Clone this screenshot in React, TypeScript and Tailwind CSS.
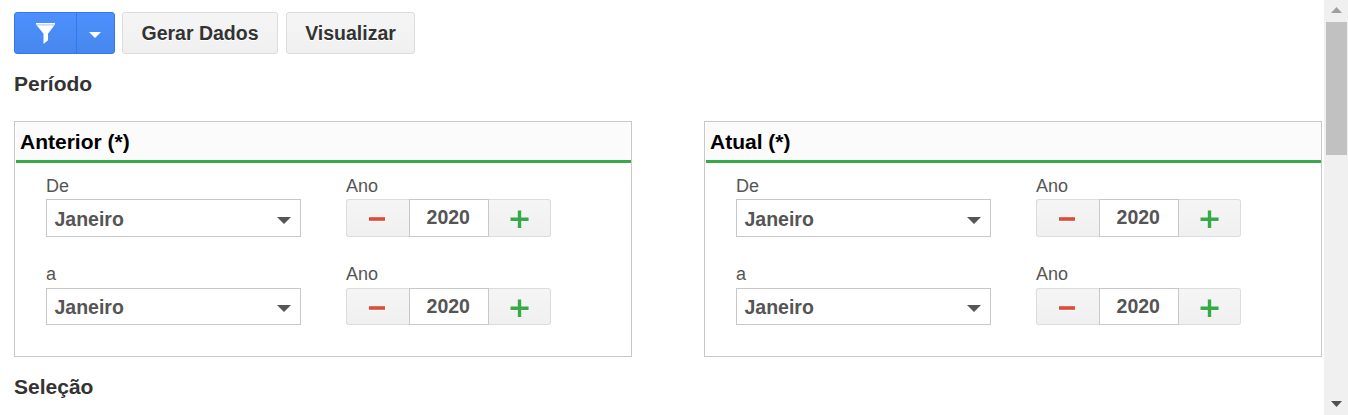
import React, { useState } from 'react';

type RowProps = {
  label: string;
  className: string;
  labelClass: string;
  height: string;
};

const spinButton =
  'flex w-[63px] items-center justify-center border border-[#dcdcdc] bg-linear-to-b from-[#f5f5f5] to-[#f0f0f0]';

const PeriodRow = ({ label, className, labelClass, height }: RowProps) => {
  const [year, setYear] = useState<number>(2020);

  return (
    <div className={`flex ${className}`}>
      <div className="w-[255px]">
        <div className={`h-[27px] text-[18px] text-[#555] ${labelClass}`}>{label}</div>
        <button
          type="button"
          className={`flex w-full items-center justify-between border border-[#c8c8c8] bg-white pr-[9px] pl-[7.5px] text-[19.5px] leading-[29px] font-bold text-[#555] ${height}`}
        >
          <span className="mt-[2.5px]">Janeiro</span>
          <svg className="mt-1 h-[7px] w-[14px]" viewBox="0 0 14 7" fill="#555">
            <path d="M0 0h14L7 7z" />
          </svg>
        </button>
      </div>

      <div className="ml-[45px]">
        <div className={`h-[27px] text-[18px] text-[#555] ${labelClass}`}>Ano</div>
        <div className={`flex ${height}`}>
          <button type="button" className={`${spinButton} rounded-l-[3px] border-r-0`} onClick={() => setYear(year - 1)}>
            <svg className="mt-0.5 h-5 w-5 drop-shadow-[0_1px_0_#fff]" viewBox="0 0 20 20" fill="#dd4b39">
              <path d="M1 8.2h16v3.6H1z" />
            </svg>
          </button>
          <div className="relative z-10 flex w-[80px] justify-center border border-[#c8c8c8] bg-white pt-[3px] pr-[1.5px] text-[19.5px] leading-[29px] font-bold text-[#555]">
            {year}
          </div>
          <button type="button" className={`${spinButton} -ml-px rounded-r-[3px] border-l-0`} onClick={() => setYear(year + 1)}>
            <svg className="mt-0.5 h-5 w-5 drop-shadow-[0_1px_0_#fff]" viewBox="0 0 20 20" fill="#35aa47">
              <path d="M8.8 1.6h3.4v6.9h7.4v3.4h-7.4V19H8.8v-7.1H1.5V8.5h7.3z" />
            </svg>
          </button>
        </div>
      </div>
    </div>
  );
};

const Panel = ({ title }: { title: string }) => (
  <div className="h-[236px] w-[618px] border border-[#c8c8c8] bg-white">
    <div className="ml-px h-[41px] border-b-[3px] border-[#35aa47] bg-[#fbfbfb] pl-1 text-[21px] leading-[40px] font-bold text-black">
      {title}
    </div>
    <div className="pt-[9px] pl-[31px]">
      <PeriodRow label="De" className="h-[88px]" labelClass="leading-[29px]" height="h-[38px]" />
      <PeriodRow label="a" className="pt-px" labelClass="leading-[27px]" height="h-[37px]" />
    </div>
  </div>
);

const App = () => {
  const toolButton =
    'h-[42px] rounded-[3px] border border-[#dcdcdc] bg-linear-to-b from-[#f5f5f5] to-[#f0f0f0] text-[19.5px] leading-[40px] font-bold text-[#333] [text-shadow:0_1px_0_#fff]';

  return (
    <div className="flex h-[415px] w-[1348px] justify-between overflow-hidden bg-white font-['Liberation_Sans',Arial,sans-serif]">
      <main className="pt-3 pl-3.5">
        <div className="flex">
          <div className="flex h-[42px] w-[101px] overflow-hidden rounded-[3px] border border-[#3079ed] bg-linear-to-b from-[#4d90fe] to-[#4787ed]">
            <button type="button" className="flex w-[62px] items-center justify-center border-r border-[#3079ed]">
              <svg className="mt-px h-[21px] w-[19px]" viewBox="0 0 19 21" fill="#fff">
                <path d="M0 0h19v1.6H0z" />
                <path d="M0 1.6h19L18 3H1z" fillOpacity="0.7" />
                <path d="M1 2.8h17L12 10.7v6.6L7.5 21V10.7z" />
              </svg>
            </button>
            <button type="button" className="flex flex-1 items-center justify-center pr-[1.5px]">
              <svg className="mt-[3px] h-[6px] w-3" viewBox="0 0 12 6" fill="#fff">
                <path d="M0 0h12L6 6z" />
              </svg>
            </button>
          </div>
          <button type="button" className={`${toolButton} ml-[7px] w-[156px]`}>Gerar Dados</button>
          <button type="button" className={`${toolButton} ml-2 w-[129px]`}>Visualizar</button>
        </div>

        <h2 className="mt-[15px] h-[30px] text-[21px] leading-[30px] font-bold text-[#333]">Período</h2>
        <div className="mt-[22px] flex gap-[72px]">
          <Panel title="Anterior (*)" />
          <Panel title="Atual (*)" />
        </div>
        <h2 className="mt-[15px] h-[30px] text-[21px] leading-[30px] font-bold text-[#333]">Seleção</h2>
      </main>

      <div className="flex w-6 shrink-0 flex-col items-center bg-[#f0f0f0]">
        <svg className="mt-[7px] h-[6px] w-[11px]" viewBox="0 0 11 6" fill="#a0a0a0">
          <path d="M5.5 0L11 6H0z" />
        </svg>
        <div className="mt-[9px] ml-px h-[133px] w-[21px] bg-[#c1c1c1]" />
        <svg className="mt-auto mb-2 h-[6px] w-[11px]" viewBox="0 0 11 6" fill="#505050">
          <path d="M0 0h11L5.5 6z" />
        </svg>
      </div>
    </div>
  );
};

export default App;
